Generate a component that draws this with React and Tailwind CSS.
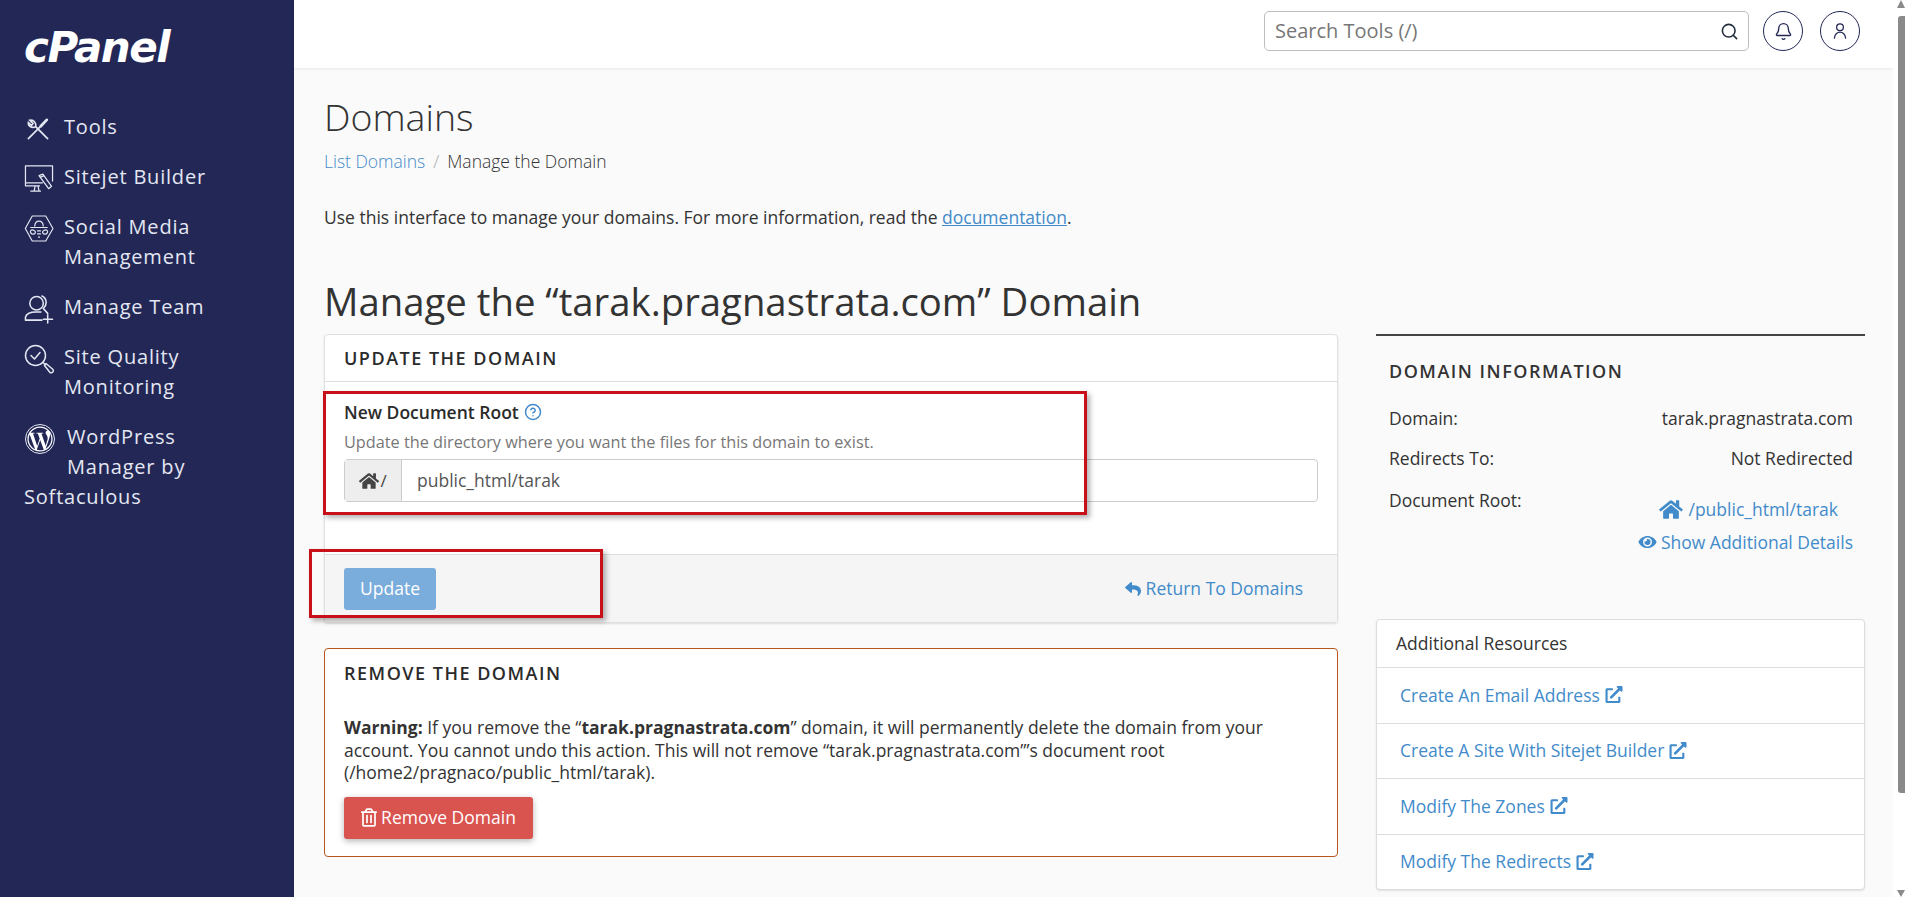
import { Bell, CircleHelp, Search } from 'lucide-react';
import { FaEye, FaHome, FaReply, FaRegTrashAlt, FaWordpressSimple, FaExternalLinkAlt } from 'react-icons/fa';

const ToolsIcon = () => (
  <svg viewBox="0 0 24 24" className="h-[22px] w-[22px]" fill="none" stroke="currentColor" strokeWidth="1.8" strokeLinecap="round">
    <path d="M1.5 22.5 L14 10" />
    <path d="M15 9 L21.5 2" strokeWidth="3" />
    <path d="M22.5 22.5 L9.5 9.5 C10.5 6 7.5 1.5 3 2.5 L6.5 6 L5 8 L1.5 5 C1 9 5.5 11.5 9.5 9.5" />
  </svg>
);

const SitejetIcon = () => (
  <svg viewBox="0 0 30 30" className="h-[29px] w-[30px]" fill="none" stroke="currentColor" strokeWidth="1.3" strokeLinejoin="round">
    <path d="M16 21.5 H1 V1 H29 V17 M1 18.5 H19" />
    <path d="M11 21.5 L10 27 H6 M17 27 H6 M14 21.5 L15 27" />
    <path d="M15 11 L19 9.5 L28 22 L25 24.5 Z M16 13 L20 11" />
  </svg>
);

const SocialIcon = () => (
  <svg viewBox="0 0 30 28" className="h-[27px] w-[30px]" fill="none" stroke="currentColor" strokeWidth="1.2" strokeLinejoin="round">
    <path d="M8 1 H22 L29.5 14 L22 27 H8 L0.8 14 Z" />
    <path d="M10.5 12 C11 4.5 19 4.5 19.5 12 M6 13 H24 M8 20 C4 17 7 14.5 10 16 C12 17 12 20 8 20 Z M22 20 C26 17 23 14.5 20 16 C18 17 18 20 22 20 Z M13 16.5 H17 M13 19.5 H17 M14 23 H16" />
  </svg>
);

const TeamIcon = () => (
  <svg viewBox="0 0 30 30" className="h-[29px] w-[30px]" fill="none" stroke="currentColor" strokeWidth="1.6" strokeLinecap="round">
    <circle cx="12.5" cy="8.5" r="7" />
    <path d="M18 1 C23 3 24 10 19.5 14 L24 19" />
    <path d="M1 26 V23 C2 18 8 17.5 12 17.5 H17 M1 26 H18 M24 20.5 V29 M19.5 25 H29" />
  </svg>
);

const QualityIcon = () => (
  <svg viewBox="0 0 30 30" className="h-[30px] w-[30px]" fill="none" stroke="currentColor" strokeWidth="1.5" strokeLinecap="round" strokeLinejoin="round">
    <circle cx="11.5" cy="11.5" r="10" />
    <path d="M7 11.5 L10.5 15 L16 8.5" />
    <path d="M19 18.5 L21 20.5 M20.5 21.5 L22 19.5 L29 25.5 C30 28 28 29.5 26 28.5 Z" />
  </svg>
);

const UserIcon = () => (
  <svg viewBox="0 0 24 24" className="h-[18px] w-[18px]" fill="none" stroke="#222756" strokeWidth="1.7" strokeLinecap="round">
    <circle cx="12" cy="7" r="4.5" />
    <path d="M4.5 21.5 C5 16 9 13.5 12 13.5 C15 13.5 19 16 19.5 21.5" />
  </svg>
);

const navItems = [
  { label: 'Tools', icon: <ToolsIcon />, box: 'pl-[3px] pt-[6px]' },
  { label: 'Sitejet Builder', icon: <SitejetIcon />, box: 'pt-[3px]' },
  { label: 'Social Media Management', icon: <SocialIcon />, box: 'pt-[3px]' },
  { label: 'Manage Team', icon: <TeamIcon />, box: 'pt-[3px]' },
  { label: 'Site Quality Monitoring', icon: <QualityIcon />, box: 'pt-[2px]' },
];

const resources = [
  'Create An Email Address',
  'Create A Site With Sitejet Builder',
  'Modify The Zones',
  'Modify The Redirects',
];

function Sidebar() {
  return (
    <aside className="h-full w-[294px] shrink-0 bg-[#222756] pl-[24px] pt-[24px] text-[#e4e7f2]">
      <div className="h-[88px] text-[42px] font-bold italic leading-[48px] tracking-[-1.5px] text-white [font-family:'DejaVu_Sans',sans-serif]">
        cPanel
      </div>
      <nav className="flex w-[230px] flex-col gap-[20px] text-[20px] leading-[30px] tracking-[0.8px]">
        {navItems.map((item) => (
          <a key={item.label} className="flex">
            <span className={`h-[30px] w-[40px] shrink-0 ${item.box}`}>{item.icon}</span>
            <span>{item.label}</span>
          </a>
        ))}
        <a className="block w-[190px]">
          <span className="float-left flex h-[60px] w-[43px] items-start pl-[1px] pt-[2px]">
            <span className="flex h-[30px] w-[30px] items-center justify-center rounded-full border border-[#e4e7f2]">
              <FaWordpressSimple className="h-[26px] w-[26px] text-white" />
            </span>
          </span>
          WordPress Manager by Softaculous
        </a>
      </nav>
    </aside>
  );
}

function TopBar() {
  return (
    <header className="flex h-[68px] items-start justify-end gap-[17px] bg-white pr-[33px] pt-[11px] shadow-[0_1px_3px_rgba(0,0,0,0.08)]">
      <div className="mr-[-3px] flex h-[40px] w-[485px] items-center justify-between rounded-[5px] border border-[#bdbdbd] pl-[10px] pr-[9px]">
        <span className="text-[20px] text-[#777]">Search Tools (/)</span>
        <Search className="h-[19px] w-[19px] text-[#222c3a]" strokeWidth={2} />
      </div>
      <button className="flex h-[40px] w-[40px] items-center justify-center rounded-full border border-[#222756]">
        <Bell className="h-[19px] w-[19px] text-[#222756]" strokeWidth={1.7} />
      </button>
      <button className="flex h-[40px] w-[40px] items-center justify-center rounded-full border border-[#222756]">
        <UserIcon />
      </button>
    </header>
  );
}

function UpdateCard() {
  return (
    <section className="relative h-[289px] rounded-[4px] border border-[#e0e0e0] bg-white shadow-[0_1px_2px_rgba(0,0,0,0.12)]">
      <h2 className="flex h-[47px] items-center border-b border-[#ddd] pl-[19px] text-[18px] font-semibold uppercase tracking-[1.5px] text-[#2b2b2b]">
        Update the Domain
      </h2>
      <div className="h-[172px] px-[19px] pt-[17px]">
        <div className="flex items-center gap-[5px] text-[17.5px] font-semibold leading-[26px] text-[#2b2b2b]">
          New Document Root
          <CircleHelp className="h-[18px] w-[18px] text-[#428bca]" strokeWidth={2} />
        </div>
        <p className="mt-[5px] text-[16.25px] leading-[24px] text-[#777]">
          Update the directory where you want the files for this domain to exist.
        </p>
        <div className="mt-[5px] flex h-[43px] rounded-[4px] border border-[#ccc]">
          <span className="flex w-[57px] items-center justify-center gap-[1px] border-r border-[#ccc] bg-[#eee] text-[17px] text-[#444]">
            <FaHome className="h-[18px] w-[20px]" />/
          </span>
          <span className="flex items-center pl-[15px] text-[17.5px] text-[#555]">public_html/tarak</span>
        </div>
      </div>
      <div className="flex h-[68px] items-center justify-between border-t border-[#ddd] bg-[#f5f5f5] pl-[19px] pr-[34px]">
        <button className="h-[42px] w-[92px] rounded-[3px] bg-[#7aaddc] text-[17.5px] text-white">Update</button>
        <a className="flex items-center gap-[4px] text-[17.5px] text-[#428bca]">
          <FaReply className="h-[16px] w-[18px]" />
          Return To Domains
        </a>
      </div>
      <div className="absolute left-[-2px] top-[56px] h-[124px] w-[764px] border-[3px] border-[#c8101a] shadow-[3px_3px_5px_rgba(0,0,0,0.3)]" />
      <div className="absolute left-[-16px] top-[214px] h-[69px] w-[294px] border-[3px] border-[#c8101a] shadow-[3px_3px_5px_rgba(0,0,0,0.3)]" />
    </section>
  );
}

function RemoveCard() {
  return (
    <section className="mt-[25px] h-[209px] rounded-[4px] border border-[#b5561f] bg-white px-[19px] pt-[12px]">
      <h2 className="text-[18px] font-semibold uppercase leading-[24px] tracking-[1.5px] text-[#2b2b2b]">
        Remove the Domain
      </h2>
      <p className="mt-[31px] text-[17.5px] leading-[22.5px] text-[#333]">
        <b>Warning:</b> If you remove the “<b>tarak.pragnastrata.com</b>” domain, it will permanently delete the domain from your account. You cannot undo this action. This will not remove “tarak.pragnastrata.com”’s document root (/home2/pragnaco/public_html/tarak).
      </p>
      <button className="mt-[13px] flex h-[42px] w-[189px] items-center justify-center gap-[4px] rounded-[3px] bg-[#d9534f] text-[17.5px] text-white shadow-[0_2px_6px_rgba(0,0,0,0.3)]">
        <FaRegTrashAlt className="h-[19px] w-[16px]" />
        Remove Domain
      </button>
    </section>
  );
}

function InfoPanel() {
  return (
    <aside className="w-[489px] shrink-0">
      <div className="h-[285px] border-t-2 border-[#444] pl-[13px] pr-[12px] pt-[22px]">
        <h2 className="text-[18px] font-semibold uppercase leading-[26px] tracking-[1.5px] text-[#333]">Domain Information</h2>
        <dl className="mt-[22px] text-[17.5px] leading-[24px] text-[#333]">
          <div className="flex justify-between"><dt>Domain:</dt><dd>tarak.pragnastrata.com</dd></div>
          <div className="mt-[16px] flex justify-between"><dt>Redirects To:</dt><dd>Not Redirected</dd></div>
          <div className="mt-[18px] flex justify-between">
            <dt>Document Root:</dt>
            <dd className="flex flex-col items-end text-[#428bca]">
              <span className="mr-[15px] mt-[9px] flex items-center gap-[5px]"><FaHome className="h-[21px] w-[26px]" />/public_html/tarak</span>
              <span className="mt-[9px] flex items-center gap-[3px]"><FaEye className="h-[16px] w-[21px]" />Show Additional Details</span>
            </dd>
          </div>
        </dl>
      </div>
      <div className="rounded-[4px] border border-[#ddd] bg-white shadow-[0_1px_2px_rgba(0,0,0,0.1)]">
        <div className="flex h-[47px] items-center pb-[1px] pl-[19px] text-[17.5px] text-[#333]">Additional Resources</div>
        {resources.map((r) => (
          <a key={r} className="flex h-[55.5px] items-center gap-[5px] border-t border-[#ddd] pb-[1px] pl-[23px] text-[17.5px] text-[#428bca]">
            {r}
            <FaExternalLinkAlt className="h-[17px] w-[18px]" />
          </a>
        ))}
      </div>
    </aside>
  );
}

function Scrollbar() {
  return (
    <div className="flex h-full w-[12px] shrink-0 flex-col items-end bg-white">
      <div className="h-0 w-0 border-x-[4px] border-b-[8px] border-x-transparent border-b-[#8a8a8a]" />
      <div className="mt-[8px] h-[777px] w-[7px] rounded-l-[3px] bg-[#8a8a8a]" />
      <div className="mt-[97px] h-0 w-0 border-x-[4px] border-t-[7px] border-x-transparent border-t-[#8a8a8a]" />
    </div>
  );
}

export default function App() {
  return (
    <div className="flex h-[897px] overflow-hidden bg-[#fafafa] text-[#333] [font-family:'Open_Sans',sans-serif]">
      <Sidebar />
      <div className="min-w-0 flex-1">
        <TopBar />
        <main className="pl-[30px] pr-[28px]">
          <h1 className="mt-[24px] text-[37.5px] font-light leading-[50px] text-[#333]">Domains</h1>
          <div className="mt-[7px] flex text-[17.5px] font-light leading-[24px]">
            <a className="text-[#428bca]">List Domains</a>
            <span className="mx-[8px] text-[#aaa]">/</span>
            <span className="text-[#333]">Manage the Domain</span>
          </div>
          <p className="mt-[32px] text-[17.5px] leading-[24px] text-[#333]">
            Use this interface to manage your domains. For more information, read the{' '}
            <a className="text-[#428bca] underline">documentation</a>.
          </p>
          <h1 className="mt-[47px] text-[38.3px] leading-[50px] text-[#333]">Manage the “tarak.pragnastrata.com” Domain</h1>
          <div className="mt-[8px] flex gap-[38px]">
            <div className="w-[1014px] shrink-0">
              <UpdateCard />
              <RemoveCard />
            </div>
            <InfoPanel />
          </div>
        </main>
      </div>
      <Scrollbar />
    </div>
  );
}
